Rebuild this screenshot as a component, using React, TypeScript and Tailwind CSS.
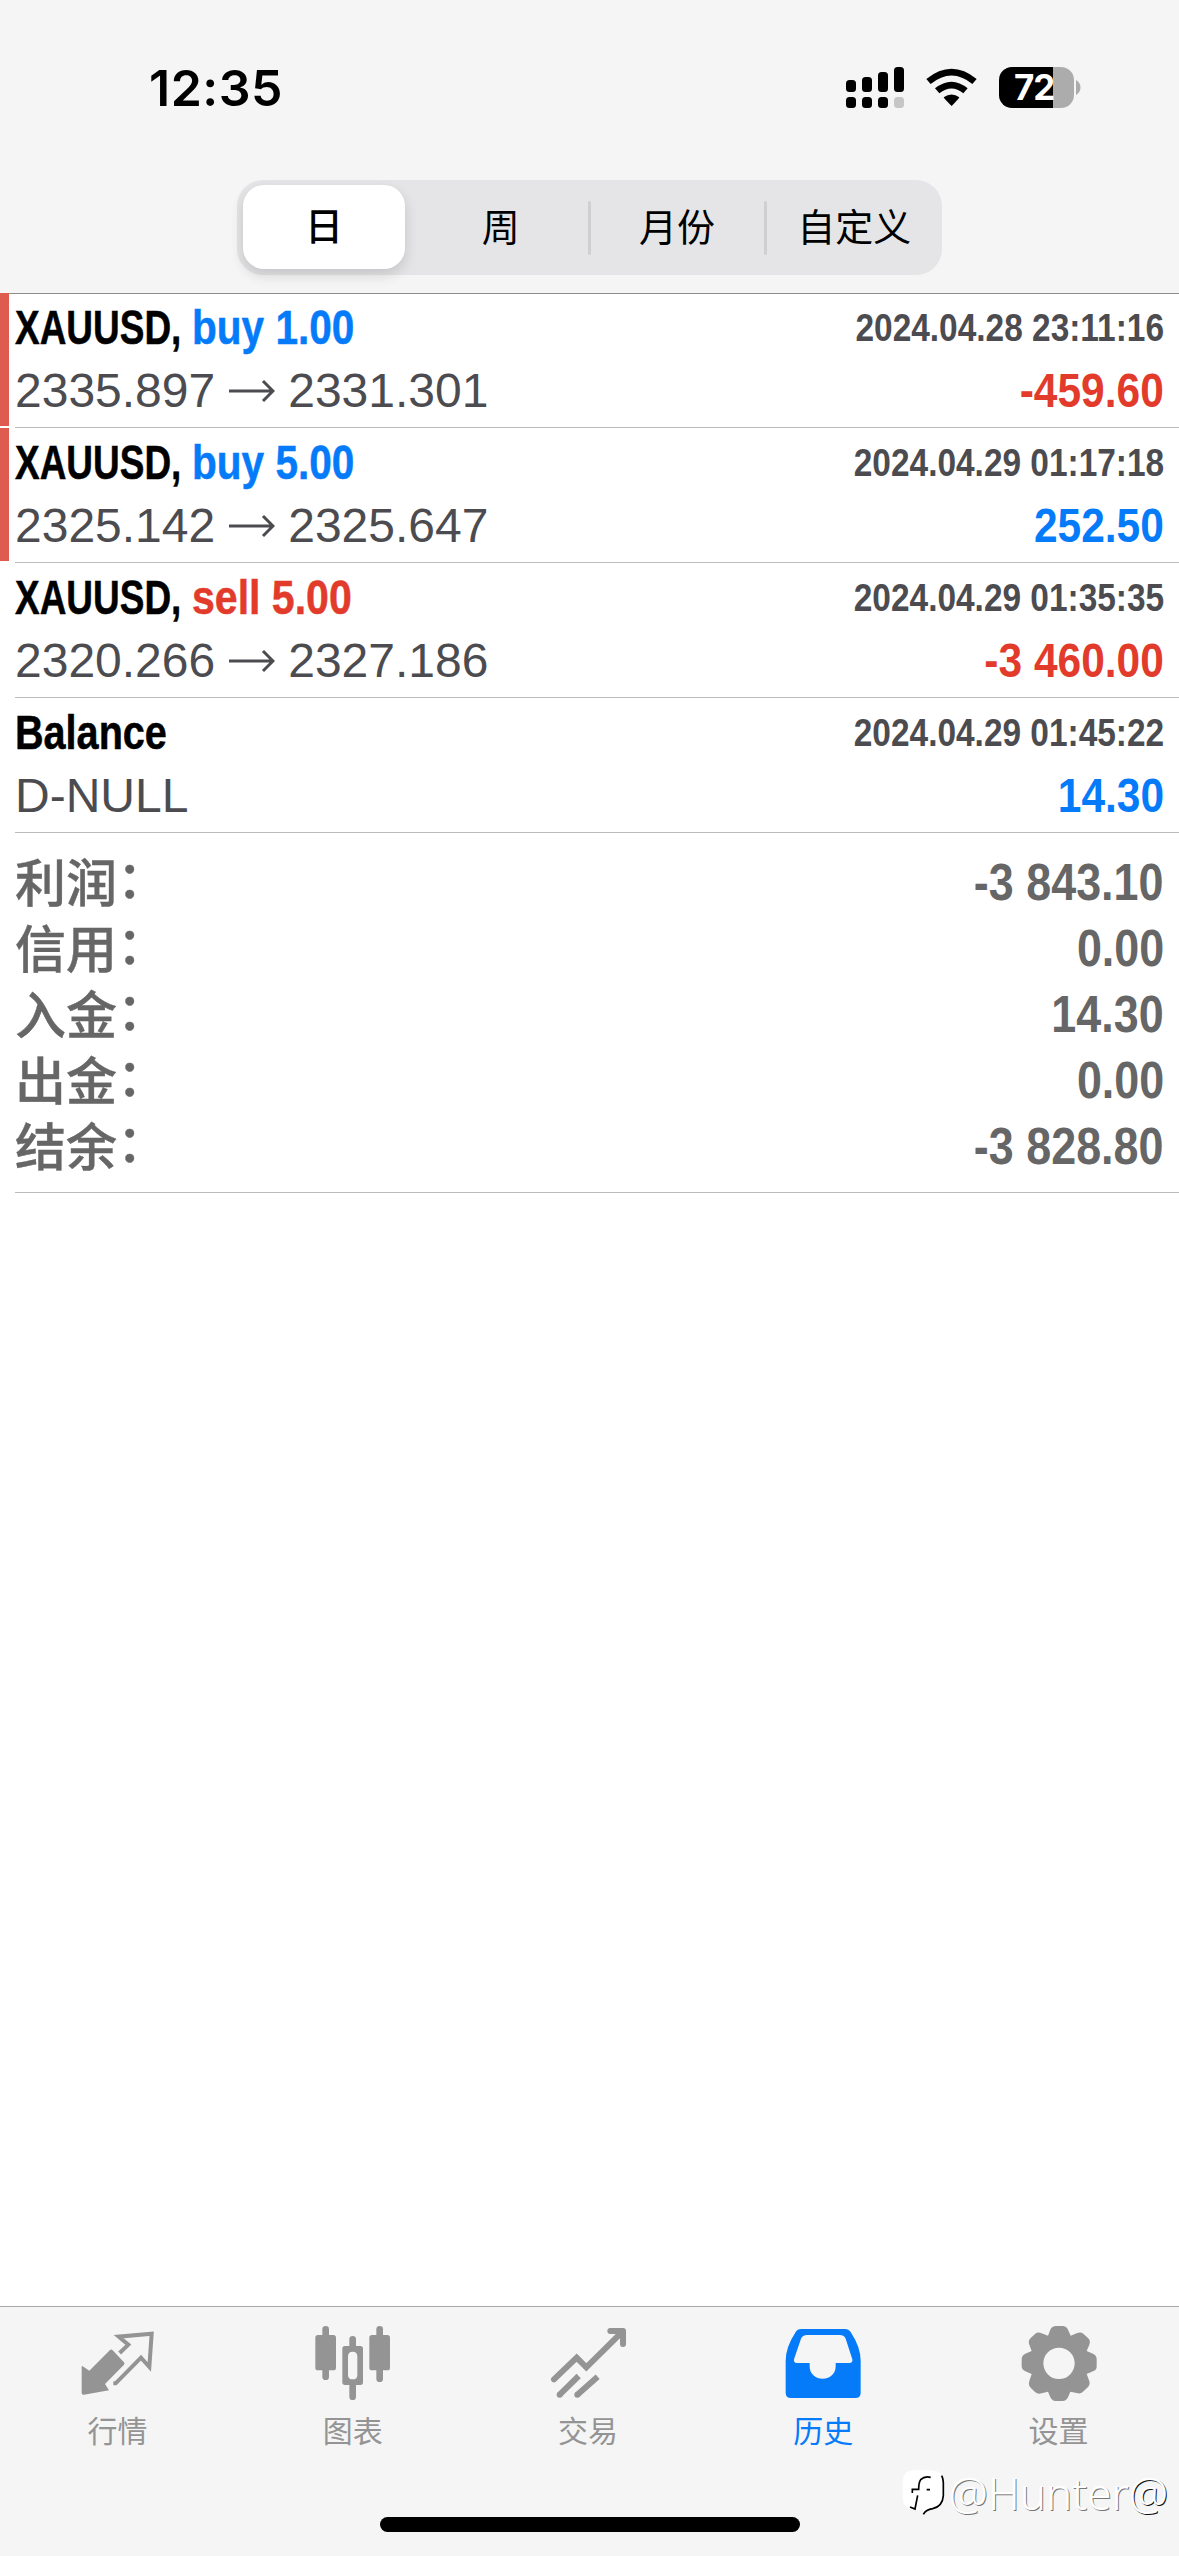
import type { ReactNode } from "react";

type Deal = {
  title: string;
  titleClass: string;
  side?: string;
  sideClass?: string;
  time: string;
  open: string;
  close?: string;
  profit: string;
  profitClass: string;
  marked: boolean;
};

const deals: Deal[] = [
  {
    title: "XAUUSD,",
    titleClass: "scale-x-[0.77]",
    side: "buy 1.00",
    sideClass: "scale-x-[0.845] text-[#067bf9]",
    time: "2024.04.28 23:11:16",
    open: "2335.897",
    close: "2331.301",
    profit: "-459.60",
    profitClass: "text-[#e23b2b]",
    marked: true,
  },
  {
    title: "XAUUSD,",
    titleClass: "scale-x-[0.77]",
    side: "buy 5.00",
    sideClass: "scale-x-[0.845] text-[#067bf9]",
    time: "2024.04.29 01:17:18",
    open: "2325.142",
    close: "2325.647",
    profit: "252.50",
    profitClass: "text-[#067bf9]",
    marked: true,
  },
  {
    title: "XAUUSD,",
    titleClass: "scale-x-[0.77]",
    side: "sell 5.00",
    sideClass: "scale-x-[0.855] text-[#e23b2b]",
    time: "2024.04.29 01:35:35",
    open: "2320.266",
    close: "2327.186",
    profit: "-3 460.00",
    profitClass: "text-[#e23b2b]",
    marked: false,
  },
  {
    title: "Balance",
    titleClass: "scale-x-[0.825]",
    time: "2024.04.29 01:45:22",
    open: "D-NULL",
    profit: "14.30",
    profitClass: "text-[#067bf9]",
    marked: false,
  },
];

const totals = [
  { label: "利润", value: "-3 843.10" },
  { label: "信用", value: "0.00" },
  { label: "入金", value: "14.30" },
  { label: "出金", value: "0.00" },
  { label: "结余", value: "-3 828.80" },
];

const periods = ["日", "周", "月份", "自定义"];

const StatusBar = () => (
  <div className="flex h-[180px] items-start justify-between pl-[149px] pr-[98px]">
    <span className="mt-[58px] font-['Inter'] text-[50px] leading-[60px] font-semibold tracking-[0.5px]">
      12:35
    </span>
    <div className="mt-[67px] flex items-start">
      <svg className="h-[41px] w-[58px]" viewBox="0 0 58 41">
        <rect x="0" y="13" width="10" height="12" rx="3.5" />
        <rect x="16" y="10" width="10" height="15" rx="3.5" />
        <rect x="32" y="5" width="10" height="20" rx="3.5" />
        <rect x="48" y="0" width="10" height="25" rx="3.5" />
        <rect x="0" y="30" width="10" height="11" rx="3.5" />
        <rect x="16" y="30" width="10" height="11" rx="3.5" />
        <rect x="32" y="30" width="10" height="11" rx="3.5" />
        <rect x="48" y="30" width="10" height="11" rx="3.5" fill="#c6c6c6" />
      </svg>
      <svg className="ml-[22px] h-[41px] w-[51px]" viewBox="0 0 153 123">
        <path d="M1 36Q77 -25 152 36L139 51Q77 0 14 51Z" />
        <path d="M27 64Q77 24 125 64L112 79Q77 50 40 79Z" />
        <path d="M53 91Q77 74 100 91Q98 96 77 117Q55 96 53 91Z" />
      </svg>
      <div className="ml-[22px] flex h-[41px] w-[75px] items-center rounded-[13px] bg-[linear-gradient(90deg,#000_54px,#acacac_54px)]">
        <span className="ml-[15px] font-['Inter'] text-[35px] leading-[41px] font-bold tracking-[-1px] text-white">
          72
        </span>
      </div>
      <svg className="mt-[13px] ml-[2px] h-[15px] w-[5px]" viewBox="0 0 5 15">
        <path d="M0 0C6 3 6 12 0 15Z" fill="#acacac" />
      </svg>
    </div>
  </div>
);

const PeriodSwitch = () => (
  <div className="mx-auto flex h-[95px] w-[705px] items-center rounded-[26px] bg-[#e5e5e7]">
    {periods.map((period, index) => (
      <div key={period} className="flex h-full flex-1 items-center">
        <div
          className={
            index === 0
              ? "mb-px ml-[6px] flex h-[84px] w-[162px] items-center justify-center rounded-[21px] bg-white font-medium shadow-[0_6px_14px_rgba(0,0,0,0.14)]"
              : "flex h-full flex-1 items-center justify-center pl-px"
          }
        >
          <span className="text-[38px] leading-[50px]">{period}</span>
        </div>
        {(index === 1 || index === 2) && (
          <div className="-mr-px h-[54px] w-[3px] rounded-full bg-[#cfcfd2]" />
        )}
      </div>
    ))}
  </div>
);

const DealRow = ({ deal }: { deal: Deal }) => (
  <div className="flex h-[135px]">
    <div
      className={
        deal.marked ? "mb-[2px] w-[9px] bg-[#df5b50]" : "mb-[2px] w-[9px]"
      }
    />
    <div className="ml-[6px] flex-1 border-b border-[#bcbcc0] pr-[15px]">
      <div className="mt-[4px] flex h-[62px] items-center justify-between font-bold whitespace-nowrap">
        <div className="flex text-[48px] [-webkit-text-stroke:0.5px_currentColor]">
          <span className={`w-[177px] origin-left ${deal.titleClass}`}>
            {deal.title}
          </span>
          <span className={`origin-left ${deal.sideClass}`}>{deal.side}</span>
        </div>
        <span className="origin-right scale-x-[0.857] text-[39px] text-[#4c4c50]">
          {deal.time}
        </span>
      </div>
      <div className="flex h-[64px] items-center justify-between text-[48px]">
        <div className="flex items-center text-[#4c4c50]">
          <span>{deal.open}</span>
          {deal.close && (
            <>
              <svg
                className="mr-[13px] ml-[14px] h-[24px] w-[46px]"
                viewBox="0 0 46 24"
                fill="none"
                stroke="#4c4c50"
                strokeWidth="3"
              >
                <path d="M0 12H44M34 2L44 12L34 22" />
              </svg>
              <span>{deal.close}</span>
            </>
          )}
        </div>
        <span
          className={`origin-right scale-x-[0.885] font-bold ${deal.profitClass}`}
        >
          {deal.profit}
        </span>
      </div>
    </div>
  </div>
);

const QuotesIcon = () => (
  <>
    <path
      d="M14 127L34 140L96 78Q100 75 104 79L138 115Q141 119 138 122L81 180L93 199L18 212Q11 213 11 207V128Q12 125 14 127Z"
      fill="currentColor"
    />
    <path
      d="M125 87L151 62L122 38L221 29L214 129L189 101L113 178H106"
      fill="none"
      stroke="currentColor"
      strokeWidth="12"
    />
  </>
);

const ChartIcon = () => (
  <g fill="currentColor">
    <rect x="28" y="6" width="20" height="162" rx="10" />
    <rect x="7" y="33" width="62" height="106" rx="8" />
    <rect x="190" y="6" width="20" height="168" rx="10" />
    <rect x="169" y="33" width="62" height="106" rx="8" />
    <rect x="109" y="36" width="20" height="40" rx="10" />
    <rect x="109" y="176" width="20" height="52" rx="10" />
    <path
      fillRule="evenodd"
      d="M96 66H142Q150 66 150 74V175Q150 183 142 183H96Q88 183 88 175V74Q88 66 96 66ZM119 83Q105 83 105 97V152Q105 166 119 166Q133 166 133 152V97Q133 83 119 83Z"
    />
  </g>
);

const TradeIcon = () => (
  <g fill="none" stroke="currentColor" strokeWidth="18">
    <path d="M18 166L86 101L115 130L224 22" strokeLinecap="round" />
    <path
      d="M187 21H225V60"
      strokeLinecap="round"
      strokeLinejoin="round"
    />
    <path d="M35 212L92 156M88 212L149 158" />
    <circle cx="35" cy="212" r="9" fill="currentColor" stroke="none" />
    <circle cx="88" cy="212" r="9" fill="currentColor" stroke="none" />
  </g>
);

const HistoryIcon = () => (
  <path
    fill="currentColor"
    fillRule="evenodd"
    d="M54 15H186Q197 15 203 24Q233 70 233 110V206Q233 222 217 222H24Q8 222 8 206V110Q8 70 38 24Q43 15 54 15ZM72 33Q59 33 54 44L33 106Q31 117 42 117H80V127C80 177 158 177 158 127V117H199Q210 117 208 106L188 44Q184 33 170 33Z"
  />
);

const SettingsIcon = () => (
  <path
    fill="currentColor"
    fillRule="evenodd"
    d="M114 6H134Q145 6 150 17L158 35L176 28Q188 22 196 29L210 42Q219 51 214 62L206 81L225 89Q236 94 236 106V128Q236 137 225 142L206 150L213 169Q218 180 210 189L195 203Q188 211 176 207L157 203L150 220Q145 231 134 231H113Q102 231 97 220L90 203L71 208Q60 212 51 204L38 191Q30 183 34 171L41 150L22 142Q11 137 11 127V106Q11 94 22 89L41 81L34 62Q29 51 38 42L52 29Q60 22 71 28L90 35L97 17Q102 6 114 6ZM123 71A47 47 0 1 0 123 165A47 47 0 1 0 123 71Z"
  />
);

const tabs: { label: string; icon: ReactNode; active?: boolean }[] = [
  { label: "行情", icon: <QuotesIcon /> },
  { label: "图表", icon: <ChartIcon /> },
  { label: "交易", icon: <TradeIcon /> },
  { label: "历史", icon: <HistoryIcon />, active: true },
  { label: "设置", icon: <SettingsIcon /> },
];

const Watermark = () => (
  <div className="absolute right-[11px] bottom-[34px] flex items-center">
    <svg className="mr-[4px] h-[48px] w-[43px]" viewBox="0 0 129 144">
      <path
        d="M36 4H86Q124 4 126 40V78Q124 112 90 120Q70 124 66 141L61 122H40Q2 120 2 86V40Q2 4 36 4Z"
        fill="#fff"
      />
      <path
        d="M119 20Q125 32 124 52V80Q122 112 92 119Q72 122 64 136"
        fill="none"
        stroke="#000"
        strokeWidth="5"
      />
      <path
        d="M86 25Q68 20 56 32Q50 40 50 61H31V72M47 79L39 120L24 114M74 62H84"
        fill="none"
        stroke="#000"
        strokeWidth="5"
      />
    </svg>
    <span className="font-['Noto_Sans'] text-[44px] leading-[58px] font-light text-white [text-shadow:1px_1px_0_#777]">
      @Hunter
      <span className="[text-shadow:1px_1px_0_#111]">@</span>
    </span>
  </div>
);

const TabBar = () => (
  <div className="relative mt-auto h-[250px] border-t border-[#a9a9ab] bg-[#f5f5f5]">
    <div className="flex pr-[3px]">
      {tabs.map((tab) => (
        <div
          key={tab.label}
          className={`flex flex-1 flex-col items-center pt-[17px] ${
            tab.active ? "text-[#067bf9]" : "text-[#949494]"
          }`}
        >
          <svg className="h-[80px] w-[80px]" viewBox="0 0 240 240">
            {tab.icon}
          </svg>
          <span className="mt-[6px] text-[30px] leading-[44px]">
            {tab.label}
          </span>
        </div>
      ))}
    </div>
    <div className="absolute bottom-[24px] left-[380px] h-[15px] w-[420px] rounded-full bg-black" />
    <Watermark />
  </div>
);

const App = () => {
  return (
    <div className="flex h-[2556px] w-[1179px] flex-col overflow-hidden bg-white font-['Liberation_Sans','Noto_Sans_CJK_SC',sans-serif] text-black">
      <div className="h-[294px] border-b border-[#8c8c8e] bg-[#f5f5f5]">
        <StatusBar />
        <PeriodSwitch />
      </div>

      <div className="-mt-px">
        {deals.map((deal) => (
          <DealRow key={deal.time} deal={deal} />
        ))}
      </div>

      <div className="ml-[15px] h-[360px] border-b border-[#bcbcc0] pt-[17px] pr-[15px] text-[#666]">
        {totals.map((row) => (
          <div
            key={row.label}
            className="flex h-[66px] items-center justify-between"
          >
            <div className="-mt-[7px] flex font-['Noto_Sans_CJK_SC'] text-[51px] leading-[66px] font-medium [-webkit-text-stroke:0.4px_#666]">
              <span>{row.label}</span>
              <span className="-mt-[4px]">：</span>
            </div>
            <span className="origin-right scale-x-[0.88] text-[51px] font-bold">
              {row.value}
            </span>
          </div>
        ))}
      </div>

      <TabBar />
    </div>
  );
};

export default App;
